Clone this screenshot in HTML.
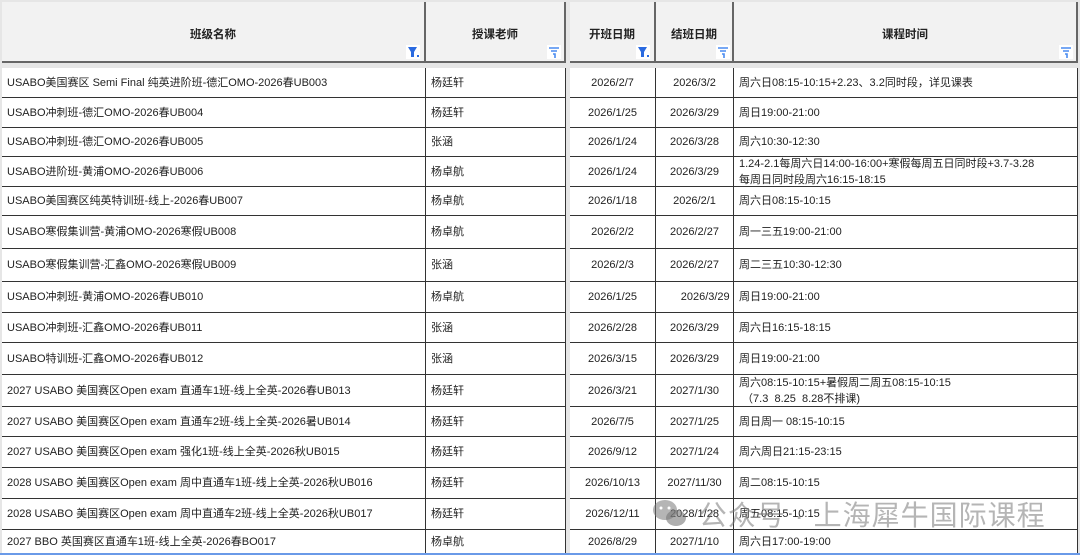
<!DOCTYPE html>
<html><head><meta charset="utf-8"><style>
*{margin:0;padding:0;box-sizing:border-box}
body{width:1080px;height:555px;overflow:hidden;background:#e6e6e6;font-family:"Liberation Sans","Noto Sans CJK SC",sans-serif;font-size:11px;color:#222;position:relative}
.hd{position:absolute;top:2px;height:61px;background:#f2f2f2;border-right:2px solid #666;border-bottom:2px solid #666;font-weight:bold;font-size:11.5px;text-align:center;padding-top:24px}
.c{position:absolute;background:#fff;border-right:1px solid #333;border-bottom:1px solid #333;display:flex;align-items:center;line-height:16px;white-space:nowrap;overflow:hidden}
.l{padding-left:5px}
.m{justify-content:center}
.f{position:absolute;width:14px;height:14px;background:#fff}
.wm{position:absolute;left:650px;top:494px;font-size:28px;color:rgba(120,120,120,.55);letter-spacing:1px;white-space:nowrap}
</style></head><body>
<div class="hd" style="left:2px;width:424px">班级名称</div>
<div class="hd" style="left:426px;width:140px">授课老师</div>
<div class="hd" style="left:570px;width:86px">开班日期</div>
<div class="hd" style="left:656px;width:78px">结班日期</div>
<div class="hd" style="left:734px;width:344px">课程时间</div>
<svg class="f" style="left:406px;top:45px" viewBox="0 0 14 14"><path d="M2 2h9L8 7v5H5V7z" fill="#2a6ae0"/><rect x="11" y="10" width="2" height="2" fill="#2a6ae0"/></svg>
<svg class="f" style="left:547px;top:45px" viewBox="0 0 14 14"><path d="M2 3h10M4 6h6M6 9h2v4" stroke="#4a8cf0" stroke-width="1.6" fill="none"/></svg>
<svg class="f" style="left:636px;top:45px" viewBox="0 0 14 14"><path d="M2 2h9L8 7v5H5V7z" fill="#2a6ae0"/><rect x="11" y="10" width="2" height="2" fill="#2a6ae0"/></svg>
<svg class="f" style="left:716px;top:45px" viewBox="0 0 14 14"><path d="M2 3h10M4 6h6M6 9h2v4" stroke="#4a8cf0" stroke-width="1.6" fill="none"/></svg>
<svg class="f" style="left:1059px;top:45px" viewBox="0 0 14 14"><path d="M2 3h10M4 6h6M6 9h2v4" stroke="#4a8cf0" stroke-width="1.6" fill="none"/></svg>
<div id="rows"></div>
<script>
var ys=[68,98,128,157,187,216,249,282,313,343,375,407,437,468,499,530,555];
var d=[
["USABO美国赛区 Semi Final 纯英进阶班-德汇OMO-2026春UB003","杨廷轩","2026/2/7","2026/3/2","周六日08:15-10:15+2.23、3.2同时段，详见课表"],
["USABO冲刺班-德汇OMO-2026春UB004","杨廷轩","2026/1/25","2026/3/29","周日19:00-21:00"],
["USABO冲刺班-德汇OMO-2026春UB005","张涵","2026/1/24","2026/3/28","周六10:30-12:30"],
["USABO进阶班-黄浦OMO-2026春UB006","杨卓航","2026/1/24","2026/3/29","1.24-2.1每周六日14:00-16:00+寒假每周五日同时段+3.7-3.28<br>每周日同时段周六16:15-18:15"],
["USABO美国赛区纯英特训班-线上-2026春UB007","杨卓航","2026/1/18","2026/2/1","周六日08:15-10:15"],
["USABO寒假集训营-黄浦OMO-2026寒假UB008","杨卓航","2026/2/2","2026/2/27","周一三五19:00-21:00"],
["USABO寒假集训营-汇鑫OMO-2026寒假UB009","张涵","2026/2/3","2026/2/27","周二三五10:30-12:30"],
["USABO冲刺班-黄浦OMO-2026春UB010","杨卓航","2026/1/25","&nbsp;&nbsp;&nbsp;&nbsp;&nbsp;&nbsp;&nbsp;2026/3/29","周日19:00-21:00"],
["USABO冲刺班-汇鑫OMO-2026春UB011","张涵","2026/2/28","2026/3/29","周六日16:15-18:15"],
["USABO特训班-汇鑫OMO-2026春UB012","张涵","2026/3/15","2026/3/29","周日19:00-21:00"],
["2027 USABO 美国赛区Open exam 直通车1班-线上全英-2026春UB013","杨廷轩","2026/3/21","2027/1/30","周六08:15-10:15+暑假周二周五08:15-10:15<br>&nbsp;（7.3&nbsp;&nbsp;8.25&nbsp;&nbsp;8.28不排课)"],
["2027 USABO 美国赛区Open exam 直通车2班-线上全英-2026暑UB014","杨廷轩","2026/7/5","2027/1/25","周日周一 08:15-10:15"],
["2027 USABO 美国赛区Open exam 强化1班-线上全英-2026秋UB015","杨廷轩","2026/9/12","2027/1/24","周六周日21:15-23:15"],
["2028 USABO 美国赛区Open exam 周中直通车1班-线上全英-2026秋UB016","杨廷轩","2026/10/13","2027/11/30","周二08:15-10:15"],
["2028 USABO 美国赛区Open exam 周中直通车2班-线上全英-2026秋UB017","杨廷轩","2026/12/11","2028/1/28","周五08:15-10:15"],
["2027 BBO 英国赛区直通车1班-线上全英-2026春BO017","杨卓航","2026/8/29","2027/1/10","周六日17:00-19:00"]];
var cols=[[2,424,"l"],[426,140,"l"],[570,86,"m"],[656,78,"m"],[734,344,"l"]];
var h="";
for(var i=0;i<d.length;i++){var y=ys[i],hh=ys[i+1]-ys[i];
for(var j=0;j<5;j++){var c=cols[j];h+='<div class="c '+c[2]+'" style="left:'+c[0]+'px;top:'+y+'px;width:'+c[1]+'px;height:'+hh+'px"><span>'+d[i][j]+'</span></div>';}}
document.getElementById("rows").innerHTML=h;
</script>
<div style="position:absolute;left:0;top:553px;width:1080px;height:2px;background:#6a9ae8"></div>
<div class="wm"><svg width="40" height="32" viewBox="0 0 40 32" style="vertical-align:-4px"><ellipse cx="15" cy="13" rx="12" ry="10" fill="rgba(120,120,120,.55)"/><ellipse cx="26" cy="21" rx="10" ry="8" fill="rgba(120,120,120,.6)"/><circle cx="11" cy="11" r="1.5" fill="#fff"/><circle cx="19" cy="11" r="1.5" fill="#fff"/></svg> 公众号 · 上海犀牛国际课程</div>
</body></html>
